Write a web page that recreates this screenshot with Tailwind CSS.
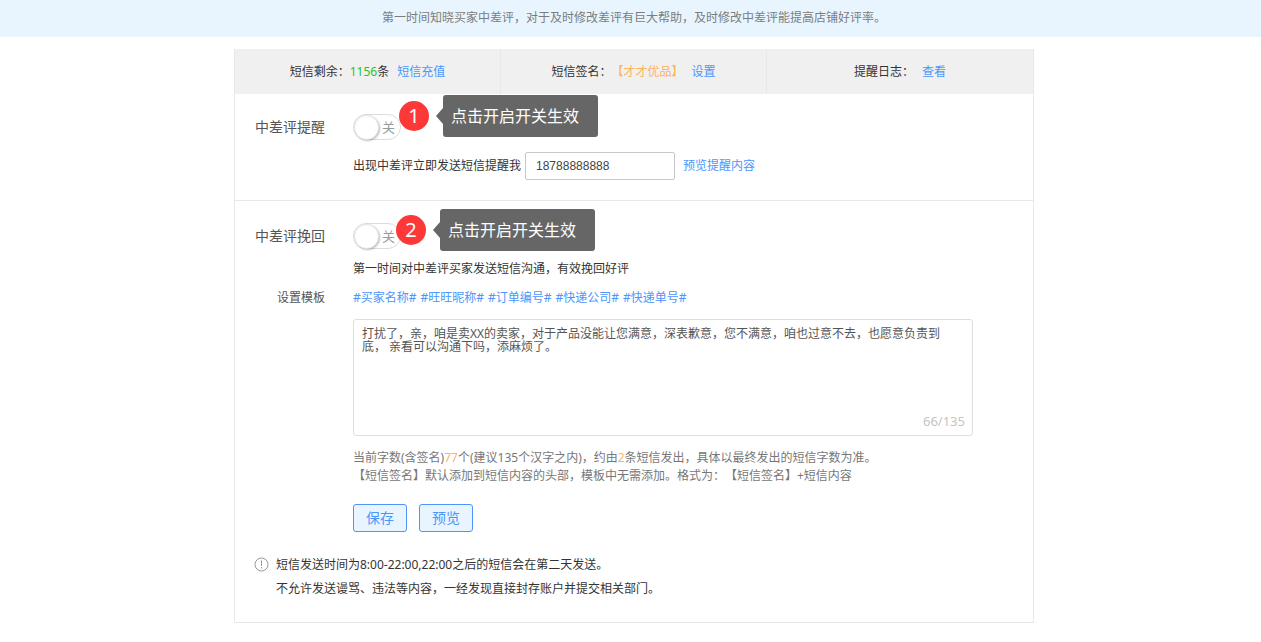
<!DOCTYPE html>
<html lang="zh-CN">
<head>
<meta charset="utf-8">
<meta name="viewport" content="width=device-width, initial-scale=1">
<title>中差评提醒</title>
<script src="https://cdn.jsdelivr.net/npm/@tailwindcss/browser@4"></script>
</head>
<body class="bg-white font-['Noto_Sans','Noto_Sans_CJK_SC',sans-serif] text-xs leading-[18px] text-[#333] [text-spacing-trim:space-all]">
  <header class="bg-[#e8f5ff] pt-[9px] pb-[10px] pl-[7px] text-center text-[#7c7c7c]">
    <p>第一时间知晓买家中差评，对于及时修改差评有巨大帮助，及时修改中差评能提高店铺好评率。</p>
  </header>

  <div class="pt-3 pb-5 pl-[7px]">
    <main class="mx-auto max-w-[800px] border border-t-0 border-[#e8e8e8]">
      <div class="grid grid-cols-3 divide-x divide-[#e8e8e8] bg-[#f0f0f0] text-center leading-[45px]">
        <p>短信剩余：<span class="text-[#1fc71f]">1156</span>条<a href="#" class="ml-2 text-[#4c96fb]">短信充值</a></p>
        <p>短信签名：<span class="text-[#ffb25c]">【才才优品】</span><a href="#" class="ml-2 text-[#4c96fb]">设置</a></p>
        <p>提醒日志：<a href="#" class="ml-2 text-[#4c96fb]">查看</a></p>
      </div>

      <section class="grid grid-cols-[90px_1fr] gap-x-7 border-b border-[#e8e8e8] pt-5 pb-5">
        <label for="remind" class="text-right text-sm leading-[26px] text-[#555]">中差评提醒</label>
        <div class="relative flex">
          <label class="flex h-[26px] w-12 items-center rounded-full border border-[#dcdcdc]">
            <input id="remind" type="checkbox" role="switch" class="size-[25px] appearance-none rounded-full border border-[#e4e4e4] bg-white shadow-[1px_1px_2px_rgba(0,0,0,0.25)]">
            <span class="ml-[3px] text-[13px] text-[#999]">关</span>
          </label>
          <div class="absolute top-[-19px] left-[46px] flex items-center">
            <span class="size-[30px] rounded-full bg-[#fd3838] text-center text-xl leading-[30px] text-white">1</span>
            <svg class="ml-[7px] h-4 w-[7px]" viewBox="0 0 7 16" fill="#666" aria-hidden="true"><path d="M7 0v16L0 8z"/></svg>
            <span class="h-[42px] w-[155px] rounded-[3px] bg-[#666] pl-2 text-base leading-[42px] text-white">点击开启开关生效</span>
          </div>
        </div>
        <div class="col-start-2 mt-3 flex items-center">
          <label for="phone">出现中差评立即发送短信提醒我</label>
          <input id="phone" type="text" value="18788888888" class="ml-1 h-7 w-[150px] rounded-xs border border-[#c8c8c8] px-[10px] font-['Liberation_Sans',sans-serif] text-xs text-[#444]">
          <a href="#" class="ml-2 text-[#4c96fb]">预览提醒内容</a>
        </div>
      </section>

      <section class="grid grid-cols-[90px_1fr] gap-x-7 pt-[22px] pb-5">
        <label for="recover" class="text-right text-sm leading-[26px] text-[#555]">中差评挽回</label>
        <div class="relative flex">
          <label class="flex h-[26px] w-12 items-center rounded-full border border-[#dcdcdc]">
            <input id="recover" type="checkbox" role="switch" class="size-[25px] appearance-none rounded-full border border-[#e4e4e4] bg-white shadow-[1px_1px_2px_rgba(0,0,0,0.25)]">
            <span class="ml-[3px] text-[13px] text-[#999]">关</span>
          </label>
          <div class="absolute top-[-14px] left-[43px] flex items-center">
            <span class="size-[30px] rounded-full bg-[#fd3838] text-center text-xl leading-[30px] text-white">2</span>
            <svg class="ml-[7px] h-4 w-[7px]" viewBox="0 0 7 16" fill="#666" aria-hidden="true"><path d="M7 0v16L0 8z"/></svg>
            <span class="h-[42px] w-[155px] rounded-[3px] bg-[#666] pl-2 text-base leading-[42px] text-white">点击开启开关生效</span>
          </div>
        </div>
        <p class="col-start-2 mt-[11px]">第一时间对中差评买家发送短信沟通，有效挽回好评</p>
        <label for="template" class="mt-[11px] text-right text-[#555]">设置模板</label>
        <div class="mt-[11px] flex gap-1 text-[#4c96fb]">
          <a href="#">#买家名称#</a>
          <a href="#">#旺旺昵称#</a>
          <a href="#">#订单编号#</a>
          <a href="#">#快递公司#</a>
          <a href="#">#快递单号#</a>
        </div>
        <div class="relative col-start-2 mt-3 mr-[60px]">
          <textarea id="template" class="block h-[117px] w-full resize-none rounded-[3px] border border-[#dedede] px-2 py-[7px] leading-[13px] text-[#555]">打扰了，亲，咱是卖XX的卖家，对于产品没能让您满意，深表歉意，您不满意，咱也过意不去，也愿意负责到底， 亲看可以沟通下吗，添麻烦了。</textarea>
          <span class="absolute right-2 bottom-[6px] text-[13px] text-[#c4c4c4]">66/135</span>
        </div>
        <div class="col-start-2 mt-[13px] text-[#777]">
          <p>当前字数(含签名)<span class="text-[#ffb25c]">77</span>个(建议135个汉字之内)，约由<span class="text-[#ffb25c]">2</span>条短信发出，具体以最终发出的短信字数为准。</p>
          <p>【短信签名】默认添加到短信内容的头部，模板中无需添加。格式为：【短信签名】+短信内容</p>
        </div>
        <div class="col-start-2 mt-[19px] flex gap-3 text-sm text-[#4c96fb]">
          <button type="button" class="h-7 w-[54px] rounded-[3px] border border-[#4c96fb] bg-[#e8f5ff]">保存</button>
          <button type="button" class="h-7 w-[54px] rounded-[3px] border border-[#4c96fb] bg-[#e8f5ff]">预览</button>
        </div>
      </section>

      <footer class="flex gap-[7px] pt-px pb-[21px] pl-[19px] leading-6">
        <svg class="mt-1 size-[15px]" viewBox="0 0 15 15" fill="none" stroke="#999" aria-hidden="true"><circle cx="7.500" cy="7.500" r="6.500"/><path d="M7.500 3.500v5.500M7.500 10v1.500"/></svg>
        <div>
          <p>短信发送时间为8:00-22:00,22:00之后的短信会在第二天发送。</p>
          <p>不允许发送谩骂、违法等内容，一经发现直接封存账户并提交相关部门。</p>
        </div>
      </footer>
    </main>
  </div>
</body>
</html>
